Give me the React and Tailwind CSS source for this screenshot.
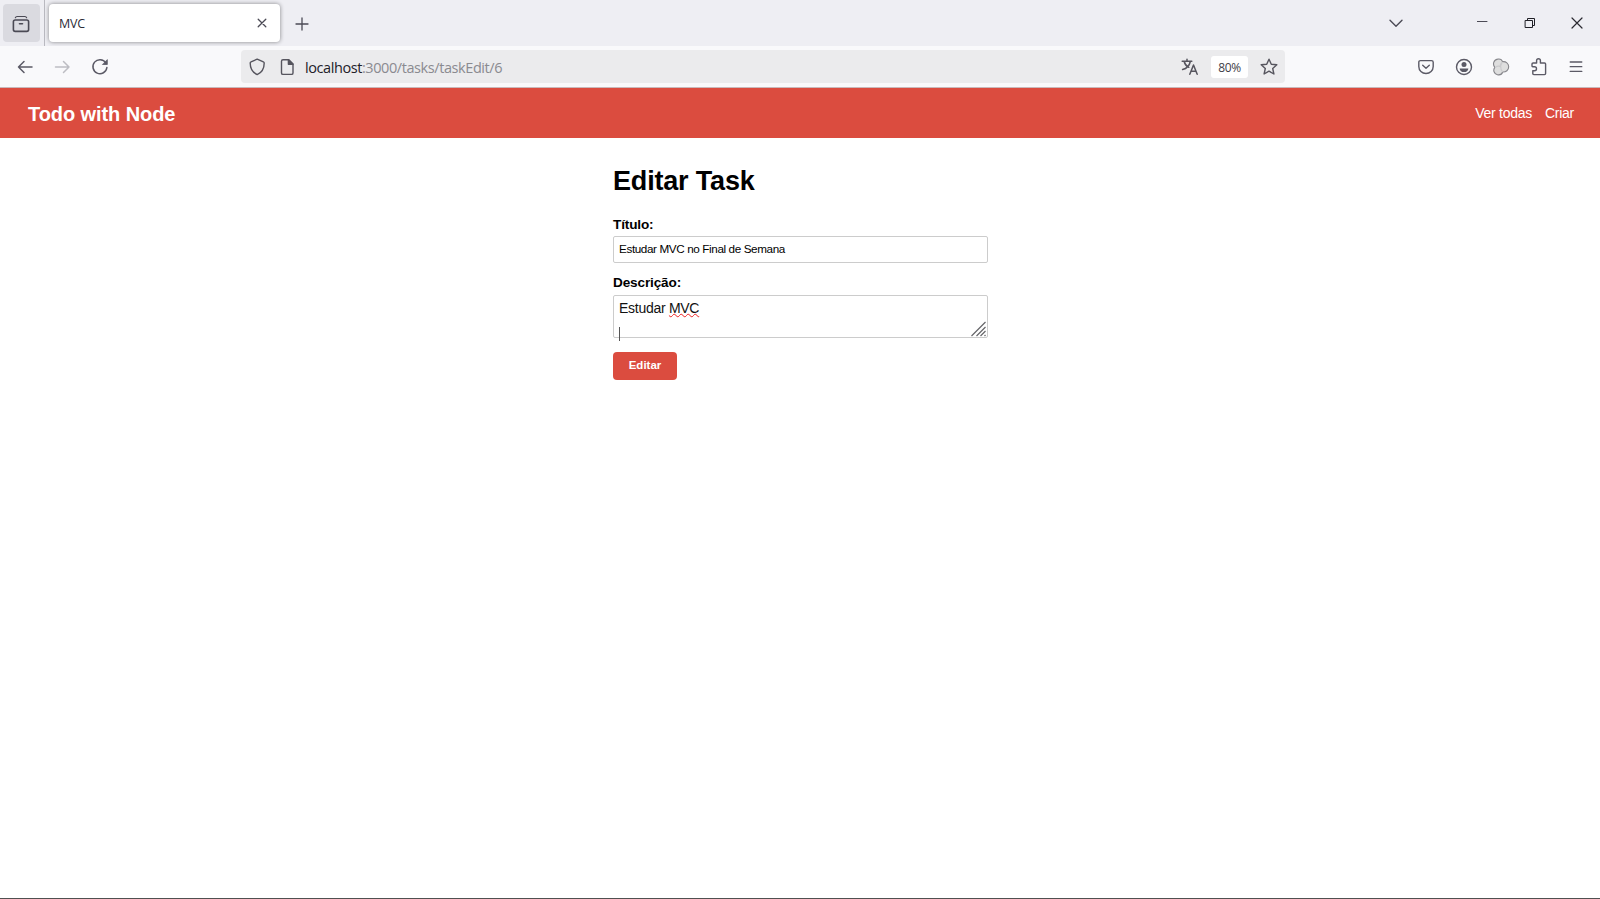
import React from "react";

function Icon({ children, className = "w-[18px] h-[18px]", box = "0 0 18 18", sw = 1.4 }) {
  return (
    <svg
      viewBox={box}
      className={`block shrink-0 ${className}`}
      fill="none"
      stroke="currentColor"
      strokeWidth={sw}
      strokeLinecap="round"
      strokeLinejoin="round"
    >
      {children}
    </svg>
  );
}

function TabStrip() {
  return (
    <div className="flex h-[46px] items-start bg-[#eeeef3] pt-1 text-[#4b4a55]">
      <div className="ml-[3px] flex h-[38px] w-[37px] items-center justify-center rounded bg-[#dadae0] pt-px pr-px">
        <Icon>
          <path d="M3.400 2.700C3.700 1.900 4.200 1.500 5 1.500h8c.8 0 1.300.4 1.600 1.200" strokeWidth="1.200" />
          <rect x="1.400" y="5" width="15.200" height="11.400" rx="1.800" strokeWidth="1.600" />
          <path d="M7.500 8.700h3" strokeWidth="1.600" />
        </Icon>
      </div>
      <div className="-mt-1 ml-1 h-[46px] w-px bg-[#b9b9c0]" />
      <div className="ml-1 flex h-[38px] w-[231px] items-center justify-between rounded bg-white pr-[9px] pl-[10px] shadow-[0_0_4px_rgba(0,0,0,0.45)]">
        <span className="pt-0.5 font-['Open_Sans','Noto_Sans',sans-serif] text-[12.500px] tracking-[-0.200px] text-[#2c2b36]">MVC</span>
        <Icon sw={1.300}>
          <path d="M5.200 5.200l7.600 7.600M12.800 5.200l-7.600 7.600" />
        </Icon>
      </div>
      <Icon className="mt-[11px] ml-[13px] h-[18px] w-[18px]" sw={1.300}>
        <path d="M9 3v12M3 9h12" />
      </Icon>
      <div className="mt-[9px] ml-auto flex items-center">
        <Icon className="mr-[66px] h-5 w-5" box="0 0 20 20" sw={1.400}>
          <path d="M4 7.200l6 6 6-6" />
        </Icon>
        <Icon className="mr-[28px] h-5 w-5" box="0 0 20 20" sw={1}>
          <path d="M5.400 8.500h9.600" />
        </Icon>
        <Icon className="mr-[27px] h-5 w-5 text-[#1f1f25]" box="0 0 20 20" sw={1}>
          <path d="M5.500 7.500h7v7h-7zM7.500 7.500v-2h7v7h-2" />
        </Icon>
        <Icon className="mr-[13px] h-5 w-5 text-[#2a2930]" box="0 0 20 20" sw={1.200}>
          <path d="M5 5l10 10M15 5L5 15" />
        </Icon>
      </div>
    </div>
  );
}

function AddressBar() {
  return (
    <div className="ml-[132px] flex h-[33px] w-[1044px] items-center rounded bg-[#ebebed] text-[#56555e]">
      <Icon className="ml-[7px] h-[18px] w-[18px]">
        <path d="M9.200 1.200l6.200 2.700c.5.200.8.600.8 1.100 0 5.200-2.300 9.500-7 11.600C4.600 14.500 2.200 10.200 2.200 5c0-.5.300-.9.800-1.100z" />
      </Icon>
      <Icon className="ml-[12px] h-[18px] w-[18px]">
        <path d="M5 1.700h5.800l4.200 4.200v9c0 .9-.6 1.500-1.500 1.500H5c-.9 0-1.500-.6-1.500-1.500V3.200c0-.9.600-1.500 1.500-1.500z" />
        <path d="M10.400 1.800v4.500H15z" fill="currentColor" />
      </Icon>
      <span className="ml-[9px] pt-[3px] font-['Open_Sans','Noto_Sans',sans-serif] text-[14.500px] tracking-[-0.420px] whitespace-nowrap text-[#8a8a90]">
        <span className="text-[#222129]">localhost</span>:3000/tasks/taskEdit/6
      </span>
      <div className="ml-auto flex items-center">
        <Icon className="mr-[12px] h-[18px] w-[18px]" sw={1.500}>
          <path d="M1.200 3.300h9.600M6 1.200v2M9.300 3.500C8.600 7 5.500 10.500 1.600 11.500M3.200 3.500c.5 2.500 2.400 4.700 4.600 5.800" />
          <path d="M8.800 16.200l3.700-9.200 3.700 9.200M10.200 13.200h4.700" />
        </Icon>
        <span className="mr-3 flex h-[22px] w-[37px] items-center justify-center rounded-[3px] bg-white pt-0.5 font-['Open_Sans','Noto_Sans',sans-serif] text-[12px] tracking-[-0.300px] text-[#3f3e47]">
          80%
        </span>
        <Icon className="mr-[7px] h-[18px] w-[18px]">
          <path d="M9 1.200l2.300 5 5.500.6-4.100 3.700 1.200 5.500L9 13.200 4.100 16l1.200-5.500L1.200 6.800l5.500-.6z" />
        </Icon>
      </div>
    </div>
  );
}

function Toolbar() {
  return (
    <div className="flex h-[42px] items-center border-b border-[#c9b9bb] bg-[#f9f9fb] text-[#5b5a66]">
      <Icon className="ml-4 h-[18px] w-[18px]" sw={1.500}>
        <path d="M16 9H2.500M8 3.500L2.500 9 8 14.500" />
      </Icon>
      <Icon className="ml-[19px] h-[18px] w-[18px] text-[#bdbdc3]" sw={1.500}>
        <path d="M2.500 9H16M10.500 3.500L16 9l-5.500 5.500" />
      </Icon>
      <Icon className="ml-5 h-[18px] w-[18px]" sw={1.500}>
        <path d="M14.800 4.800A7 7 0 1 0 15.900 9.500" />
        <path d="M16.300 2v4.500h-4.500z" fill="currentColor" strokeWidth="0.800" />
      </Icon>
      <AddressBar />
      <div className="mr-[15px] ml-auto flex items-center gap-[19.500px]">
        <Icon>
          <path d="M3.500 2.600h11c1 0 1.700.7 1.700 1.700v4.200c0 4-3.200 7-7.200 7s-7.200-3-7.200-7V4.300c0-1 .7-1.700 1.700-1.700z" />
          <path d="M5.700 7.200L9 10.300l3.300-3.100" />
        </Icon>
        <Icon>
          <circle cx="9" cy="9" r="7.500" />
          <circle cx="9" cy="6.400" r="2.500" fill="currentColor" stroke="none" />
          <path d="M4.600 10.400h8.800c-.2 2.300-2 3.700-4.400 3.700s-4.200-1.400-4.400-3.700z" fill="currentColor" stroke="none" />
        </Icon>
        <Icon sw={1.100}>
          <path
            d="M5.500 1.100C8 .6 9.900 1.700 10.500 3.700c3.400-.5 6.200 1.900 6.200 5.100s-2.800 5.500-6 5.200c-.7 2.100-3 3.200-5.300 2.700-3.400-.8-4.700-4.600-2.500-7.300C.2 6.500 1.700 1.700 5.500 1.100z"
            fill="#dedede"
            stroke="#85858a"
          />
          <path d="M3.400 9.400C5 8 7 7.800 8.800 8.700c-.2 2 .4 3.800 1.700 5" stroke="#cacacc" />
          <path d="M10.200 4.200c-1.500 1-2.200 2.700-1.900 4.500z" fill="#f1f1f1" stroke="#cacacc" />
        </Icon>
        <Icon>
          <path d="M2 7.300V6.100c0-.7.400-1.100 1.100-1.100h3.500V2.600a1.900 1.900 0 0 1 3.800 0V5h4.100c.7 0 1.100.4 1.100 1.100v9.400c0 .7-.4 1.100-1.100 1.100H3.900c-.7 0-1.100-.4-1.100-1.100v-2.700h1.700a2 2 0 0 0 0-4H2.700c-.4 0-.7-.3-.7-.7z" />
        </Icon>
        <Icon sw={1.300}>
          <path d="M3.200 4h11.600M3.200 8.700h11.600M3.200 13.400h11.600" />
        </Icon>
      </div>
    </div>
  );
}

export default function App() {
  return (
    <div className="flex h-[899px] w-[1600px] flex-col overflow-hidden border-b border-[#505050] bg-white font-['Liberation_Sans',Arial,sans-serif] text-black">
      <TabStrip />
      <Toolbar />
      <header className="flex h-[50px] shrink-0 items-center justify-between bg-[#db4c3f] pt-0.5 pr-[26px] pl-7 text-white">
        <h2 className="text-[20px] font-bold tracking-[-0.080px]">Todo with Node</h2>
        <nav className="flex gap-[13px] pb-px text-[14px] tracking-[-0.260px]">
          <a>Ver todas</a>
          <a>Criar</a>
        </nav>
      </header>
      <main className="ml-[613px] flex w-[375px] flex-col items-start pt-[25px]">
        <h1 className="text-[27px] leading-9 font-bold tracking-[-0.180px]">Editar Task</h1>
        <label className="mt-[17px] text-[13.600px] leading-[17px] font-bold tracking-[-0.150px]">Título:</label>
        <div className="mt-[3px] flex h-[27px] w-full items-center rounded-[2px] border border-[#cccccc] pb-px pl-[5px] text-[11.700px] tracking-[-0.380px]">
          Estudar MVC no Final de Semana
        </div>
        <label className="mt-[11px] text-[13.600px] leading-[17px] font-bold tracking-[-0.150px]">Descrição:</label>
        <div className="relative mt-1 h-[43px] w-full rounded-[2px] border border-[#cccccc] pt-[3px] pl-[5px] text-[14px] leading-[18px] tracking-[-0.280px] text-[#111111]">
          Estudar{" "}
          <span className="underline decoration-[#ee2222] decoration-wavy decoration-[1px] underline-offset-0 [text-decoration-skip-ink:none]">MVC</span>
          <div className="absolute top-[31px] left-[5px] h-[14px] w-px bg-[#555555]" />
          <svg viewBox="0 0 16 16" className="absolute right-0 bottom-0 h-4 w-4" stroke="#66666a" strokeWidth="1.200">
            <path d="M.5 15L14.500 1M5.500 15l9-9M9.500 15l5-5M13.500 15l1-1" />
          </svg>
        </div>
        <button className="mt-[14px] h-[28px] w-16 rounded bg-[#db4c3f] pb-px text-[11.500px] font-bold text-white">Editar</button>
      </main>
    </div>
  );
}
